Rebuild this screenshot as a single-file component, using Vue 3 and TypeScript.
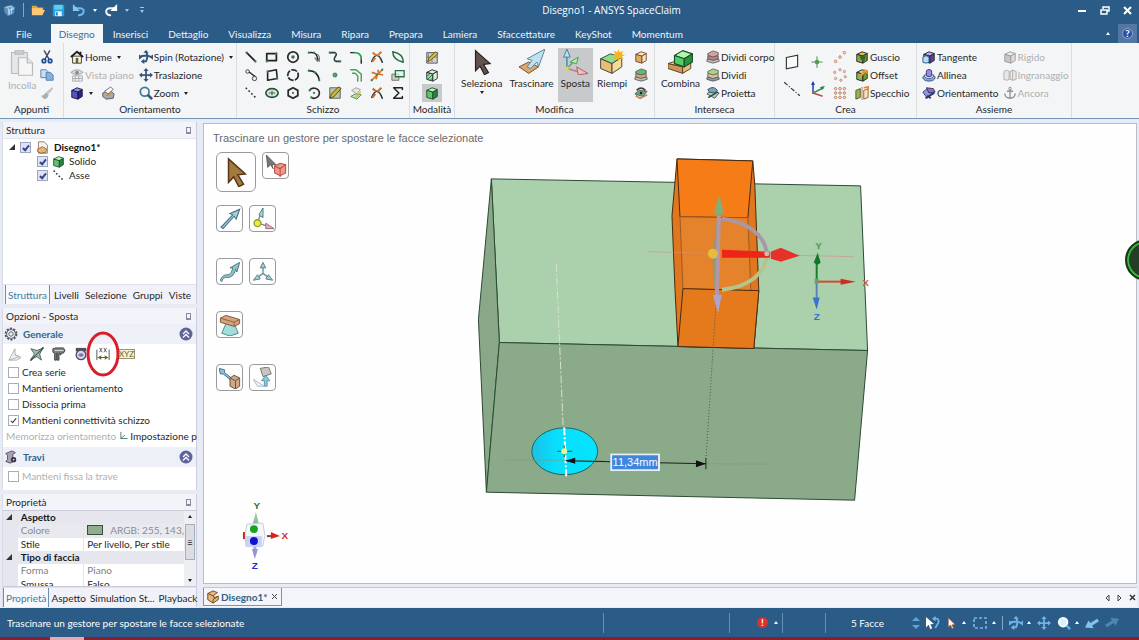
<script setup lang="ts">
import { h, ref, type FunctionalComponent } from 'vue'

const cube = (top: string, left: string, right: string, line = '#222') =>
  `<g stroke="${line}" stroke-width="1" stroke-linejoin="round"><path d="M2 5l6-3 6 2-5 3z" fill="${top}"/><path d="M2 5l7 2v8l-7-2z" fill="${left}"/><path d="M9 7l5-3v8l-5 3z" fill="${right}"/></g>`
const stroke = (d: string, c = '#222', w = 1.6) =>
  `<path d="${d}" fill="none" stroke="${c}" stroke-width="${w}" stroke-linecap="round" stroke-linejoin="round"/>`
const ends = (...pts: number[][]) =>
  pts.map(([x, y]) => `<circle cx="${x}" cy="${y}" r="1.3" fill="#3c8a5a"/>`).join('')
const slabs = (a: string, b: string, c: string) =>
  `<g stroke="#444" stroke-width=".8" stroke-linejoin="round"><path d="M1 11l6-2 8 2v2l-7 2-7-2z" fill="${c}"/><path d="M2 7l6-2 6 2v3l-6 2-6-2z" fill="${b}"/><path d="M2 4l6-3 6 2v3l-6 2-6-2z" fill="${a}"/></g>`
const move = (c: string) =>
  `<path d="M8 0l3 3.500H9v3.500h3.500V5L16 8l-3.500 3V9H9v3.500h2L8 16l-3-3.500h2V9H3.500v2L0 8l3.500-3v2H7V3.500H5z" fill="${c}"/>`
const spin = (c: string) =>
  `<path d="M5 3h6L8 0z" fill="${c}"/><path d="M0 5v6l4-3zM16 5v6l-4-3z" fill="${c}"/><path d="M8 2q3 5 0 11H4M1 8c3-2 9-2 13 0" fill="none" stroke="${c}" stroke-width="2.200"/><path d="M6 10v6l-4-3z" fill="${c}"/>`
const cross = (c: string) =>
  stroke('M2 13Q5 6 8 6T14 14', '#333', 1.8) + `<path d="M3 3l4 3M13 2L8 7M3 13l3-4" fill="none" stroke="${c}" stroke-width="2.400"/>`

const icons: Record<string, string> = {
  logo: `<path d="M1 4l9-3 5 3-2 8-7 3-4-5z" fill="#5e91be"/><path d="M3 4l7-1 3 3-5 1-1 6M6 4l2 9M11 4l-1 8" stroke="#d4e6f5" fill="none"/>`,
  folder: `<path d="M1 3h5l2 2h6v3H1z" fill="#e9a23b"/><path d="M1 14V6h12v2h3l-3 6z" fill="#ffc878"/>`,
  save: `<path d="M1 1h14v14H1z" fill="#21a2df"/><path d="M3 1h10v6H3z" fill="#60cdea"/><path d="M4 9h8v6H4z" fill="#e5f6fb"/><path d="M5 10h2v4H5z" fill="#1b78b2"/>`,
  undo: stroke('M3 6h6c6 0 6 7-1 8', '#6fb5ef', 2.3) + `<path d="M1 1v8h8z" fill="#82c4f5"/>`,
  redo: stroke('M13 6H7C1 6 1 13 7 14', '#f2f6fa', 2.3) + `<path d="M15 1v8H7z" fill="#fff"/>`,
  paste: `<g stroke="#b9bbbd" stroke-width=".7" fill="#e6e7e8"><path d="M2 2h9v12H2z"/><path d="M4 1h5v2H4z" fill="#ccc"/><path d="M6 5h5l3 3v7H6z" fill="#f6f6f7"/><path d="M11 5v3h3"/></g>`,
  cut: stroke('M5 1l5 9M11 1L6 10', '#39455c') + `<g fill="none" stroke="#1d4e9b" stroke-width="2"><circle cx="4.500" cy="12.500" r="2"/><circle cx="11.500" cy="12.500" r="2"/></g>`,
  copy: `<g stroke="#4d79ac" fill="#c9def4"><path d="M1 2h6l2 2v7H1z"/><path d="M7 5h5l3 3v6H7z" fill="#86b1df"/></g>`,
  brush: `<path d="M14 1l1 2-5 6-3-2z" fill="#c4c4c4"/><path d="M7 7l3 3c-1 4-4 5-5 5l-4-4c3 0 4-2 6-4z" fill="#aeaeae"/>`,
  home: `<path d="M3 7h10v8H3z" fill="#fff8cc" stroke="#292929"/><path d="M1 8l7-6 7 6M12 5V2" fill="none" stroke="#1c1c1c" stroke-width="2"/><path d="M6.500 9h3v6h-3z" fill="#5b604f"/>`,
  plan: `<path d="M1 5q7-6 14 0-7 5-14 0z" fill="#ddd" stroke="#999"/><circle cx="8" cy="5" r="2" fill="#888"/><path d="M3 9h11v6H3zM3 12h11M6 9v6M10 9v6" fill="none" stroke="#a5a5a5"/>`,
  blueCube: cube('#8d91e9', '#5654bd', '#292774', '#171546'),
  section: `<path d="M2 8l8-3 5 4-1 5-8 1-4-3z" fill="#aaa8b9" stroke="#555"/><path d="M4 6l7-5 3 3-6 5z" fill="#f5f7fb" stroke="#666"/><path d="M6 11l5-2" stroke="#d28b3a" stroke-width="2"/>`,
  spin: spin('#35557c'),
  move: move('#35557c'),
  zoom: `<circle cx="6.500" cy="6.500" r="5" fill="#edf6fc" stroke="#477792" stroke-width="2"/><path d="M10 10l5 5" stroke="#365873" stroke-width="3"/>`,
  line: stroke('M3 3l10 10', '#222', 2) + ends([3, 3], [13, 13]),
  rect: stroke('M2 4h11v8H2z', '#222', 2) + ends([2, 13], [13, 4]),
  circle: `<circle cx="8" cy="8" r="6" fill="none" stroke="#2c2c2c" stroke-width="2"/><circle cx="8" cy="8" r="2" fill="#35744b"/>`,
  arcTan: stroke('M2 3c8-1 10 2 10 9') + stroke('M12 5q3 2 2 8M9 9l3 4 2-4', '#777', 1.3) + ends([2, 3], [8, 3]),
  spline: stroke('M2 3h6q3 1 0 5-2 4 1 5h5', '#2c3b33', 1.8) + ends([2, 3], [14, 13]),
  corner: stroke('M2 3h4M14 10v5') + stroke('M6 3q8 0 8 7', '#34a153', 2),
  trim: cross('#e17a2c'),
  bend: stroke('M2 2q0 9 12 12Q14 4 2 2', '#286f41', 1.7),
  tangentLine: stroke('M5 4l8 6') + `<g fill="#eee" stroke="#333"><circle cx="4" cy="4" r="2"/><circle cx="12" cy="12" r="2.500"/></g>`,
  rect3: stroke('M3 4l10-2 1 10-11 2z', '#222', 1.8) + ends([3, 4], [14, 12]),
  circle3: `<circle cx="8" cy="8" r="6" fill="none" stroke="#2c2c2c" stroke-width="2" stroke-dasharray="7 1.500"/>`,
  arc3: stroke('M2 3q10 0 12 11', '#222', 1.8) + ends([2, 3], [9, 5], [14, 14]),
  point: `<circle cx="8" cy="8" r="2.300" fill="#57a66d" stroke="#347947"/>`,
  offsetCurve: stroke('M2 2h6l6 5v8', '#499c61', 1.6) + stroke('M4 6h3l3 3v6', '#499c61', 1.6),
  split: `<path d="M2 14L14 2M2 5l6 2-1 6M9 2l1 5 5 1" fill="none" stroke="#d5732b" stroke-width="2"/>` + ends([8, 8], [14, 2], [2, 14]),
  scale: `<path d="M1 7h8v7H1z" fill="#c1d7c8" stroke="#7e6056"/><path d="M5 3h10v7H5z" fill="#e2f2e8" fill-opacity=".7" stroke="#277545" stroke-width="1.500"/>`,
  axis: `<path d="M2 2l12 12" stroke="#333" stroke-width="1.800" stroke-dasharray="2 2.500"/>`,
  ellipse: `<ellipse cx="8" cy="8" rx="7" ry="5" fill="#d8e8de" stroke="#2b5340" stroke-width="1.900"/>` + stroke('M5 8h6M8 6v4', '#37704b', 1.3),
  polygon: stroke('M8 2l5.500 3v6L8 14l-5.500-3V5z', '#2c2c2c', 2) + ends([8, 8]),
  arc: stroke('M3 5c2-4 10-3 11 2s-5 9-9 6', '#2c2c2c', 1.9) + ends([3, 5], [8, 8], [5, 13]),
  pencil: `<path d="M2 2h12v12H2z" fill="#b8c7a6" stroke="#565b44"/><path d="M2 14l2-5 8-8 3 2-8 9z" fill="#c7b637" stroke="#4a4325"/>`,
  project: `<path d="M2 12l5-3 7 1-5 5z" fill="#b9e4ba" stroke="#4d8550"/><path d="M3 5l5-3 5 2-4 5z" fill="#e6e8e1" stroke="#999"/>` + stroke('M8 13l5-6', '#dbbb34'),
  extend: cross('#c56d27'),
  sigma: stroke('M13 4V2H3l6 6-6 6h10v-2', '#222', 1.7),
  modeSketch: `<path d="M2 3h12v12H2z" fill="#cfd0cf" stroke="#4d4d4d"/><path d="M4 4v10M8 4v10M2 8h12" stroke="#7d7d7d"/><path d="M3 13l1-3 8-8 3 2-9 8z" fill="#e0bd31" stroke="#5d4c1e"/>`,
  modeSection: cube('#d9eedb', '#a9dcb5', '#dff3e2') + stroke('M3 9l3-3M3 13l6-6M6 14l3-3', '#22663a', 1),
  modeSolid: cube('#b9f2be', '#61c56d', '#278443', '#174c27'),
  select: `<path d="M4 1l9 8-4 .5 3 5-2.500 1.300-2.700-5.200L4 13.500z" fill="#63514e" stroke="#271e1d" stroke-width=".7"/>`,
  pull: `<path d="M0 11l6-3 6 3-6 4z" fill="#dca66c" stroke="#76532f" stroke-width=".6"/><path d="M16 0L5 6l3 1-3 4 2 1 4-4 1 3z" fill="#bfe3ed" stroke="#57839b" stroke-width=".6"/>`,
  sposta: stroke('M3 12V4', '#4d93b0', 1) + stroke('M3 12l7 2', '#c67980', 1) + stroke('M3 12l4-4', '#63ac72', 1) + `<path d="M3 0L1 5h4z" fill="#bde3ee" stroke="#447f9c" stroke-width=".6"/><path d="M9 11l7 4-6 1z" fill="#efbbbd" stroke="#b15f69" stroke-width=".6"/><path d="M10 5L5 8l4 1z" fill="#b5efb5" stroke="#4b9a5d" stroke-width=".6"/><circle cx="3" cy="12" r="1.300" fill="#e5d34e"/>`,
  fill: `<g stroke="#494436" stroke-width=".6"><path d="M1 6l6-3 7 2-6 4z" fill="#8ddd8a"/><path d="M1 6l7 3v6l-7-3z" fill="#e7bd7a"/><path d="M8 9l6-4v6l-6 4z" fill="#f5db9b"/></g><path d="M12 0l.7 2L15 1l-1 2 2 1-2 .5 1 2-2.300-1-.7 2-.7-2-2.300 1 1-2L8 4l2-1-1-2 2.300 1z" fill="#f6b420"/>`,
  repFace: cube('#ffe4b2', '#e6a862', '#f9e0c2', '#6c4728'),
  moveFaces: slabs('#69b67a', '#df9f7d', '#b8c5ae'),
  equation: `<path d="M1 9l5-4 9 1-5 6z" fill="#6fa785" stroke="#455747"/><path d="M2 11l5 3 8-4" fill="none" stroke="#b28d60" stroke-width="2"/><path d="M3 5q5-5 10 0" fill="none" stroke="#444" stroke-width="2"/><circle cx="8" cy="8" r="1.500" fill="#222"/>`,
  combine: `<g stroke="#5b4328" stroke-width=".6" stroke-linejoin="round"><path d="M0 9l6-2 8 1-5 3z" fill="#f2cb91"/><path d="M0 9l9 2v4l-9-3z" fill="#d29557"/><path d="M9 11l5-3v4l-5 3z" fill="#eabb77"/></g><g stroke="#184e24" stroke-width=".7" stroke-linejoin="round"><path d="M4 4l5-3 6 2-5 3z" fill="#b1f5a8"/><path d="M4 4l6 2v5L4 9z" fill="#54ce65"/><path d="M10 6l5-3v5l-5 3z" fill="#269340"/></g>`,
  divBody: slabs('#d7a298', '#a9868b', '#cabbbf'),
  divide: slabs('#a6d28e', '#e6c592', '#8e99a8'),
  proj: `<path d="M1 9l5-4 9 3-5 6z" fill="#b5cfa7" stroke="#414d58"/><path d="M2 4q7-5 11 1l-3 3-6-1z" fill="#78a5bd" stroke="#38414c"/>` + stroke('M3 13l10-6', '#244b60'),
  plane: `<path d="M3 4l10-2v10L3 14z" fill="#fafafa" stroke="#333"/>`,
  pointG: stroke('M8 1v14M1 8h14', '#579b55', 1.5) + `<circle cx="8" cy="8" r="3" fill="#4b9b50"/>`,
  axisL: `<path d="M1 2l14 12" stroke="#333" stroke-dasharray="4 1.500 1 1.500"/>`,
  origin: stroke('M4 12V2', '#284bb4') + stroke('M4 12l10-5', '#3a9462') + stroke('M4 12l9 3', '#b64c4e') + `<path d="M4 0L2 4h4z" fill="#2440b4"/><path d="M16 5l-5 1 2 3z" fill="#26863c"/>`,
  patLine: `<g fill="#f8d8bc" stroke="#c28366"><circle cx="3" cy="13" r="1.500"/><circle cx="8" cy="8" r="1.500"/><circle cx="13" cy="3" r="1.500"/></g>`,
  patCirc: `<g fill="#f5dacc" stroke="#b98776"><circle cx="8" cy="2" r="1.300"/><circle cx="13" cy="4" r="1.300"/><circle cx="14" cy="10" r="1.300"/><circle cx="9" cy="14" r="1.300"/><circle cx="3" cy="12" r="1.300"/><circle cx="2" cy="5" r="1.300"/></g>`,
  patGrid: `<g fill="#fae3ce" stroke="#b67756">${[3, 8, 13].map(x => [3, 8, 13].map(y => `<circle cx="${x}" cy="${y}" r="1.400"/>`).join('')).join('')}</g>`,
  shell: cube('#ddbb4b', '#8aad42', '#679833') + `<path d="M5 8l3-2 4 1-1 5-4-1z" fill="#366831"/>`,
  offset: cube('#c8d78b', '#8eb44b', '#719a38') + `<path d="M9 1l5 1 1 5-3-2-5 5-2-2 5-5z" fill="#e89b43"/>`,
  mirror: `<path d="M1 5l5-2v10l-5 2z" fill="#9ab64b" stroke="#425120"/><path d="M10 5l5-2v10l-5 2z" fill="#f8e3bf" stroke="#7b5c32"/><path d="M8 1v15" stroke="#bd6b2c"/><path d="M10 2l5-1v4" fill="none" stroke="#ec8435" stroke-width="2"/>`,
  tangent: cube('#b8adf0', '#8b70c6', '#5c409e') + `<path d="M1 8q4-3 7 0v6q-4 2-7 0z" fill="#b5dff0" stroke="#284b87"/>`,
  align: `<ellipse cx="8" cy="11" rx="7" ry="4" fill="#8ba8d7" stroke="#314a87"/><ellipse cx="8" cy="9" rx="5" ry="3" fill="#d8e6f5" stroke="#405b91"/><path d="M5 3q3-3 6 0v6q-3 2-6 0z" fill="#9a8bdb" stroke="#413680"/>`,
  orient: `<path d="M1 7l5-4 6 5-6 6z" fill="#8f98da" stroke="#303a6d"/><path d="M5 2l8 1 2 4-7 1z" fill="#8772be" stroke="#34285c"/><path d="M4 14l10-6M6 11l4 3" stroke="#253964" stroke-width="2"/>`,
  rigid: cube('#e9e9e9', '#c6c6c6', '#ddd', '#999'),
  gear: `<g fill="#e8e8e8" stroke="#aaa"><path d="M1 4q3-3 6 0v9q-3 2-6 0zM8 4q3-3 7 0v9q-3 2-7 0zM11 2v12"/></g>`,
  anchor: stroke('M8 4v10M5 6h6M2 9q1 5 6 5t6-5', '#909090', 1.5) + `<circle cx="8" cy="3" r="1.500" fill="none" stroke="#888"/>`,
  doc: `<path d="M3 1h7l4 4v10H3z" fill="#f7f3f1" stroke="#886b5d"/><path d="M2 10l6-3 5 3-1 4-6 1-4-2z" fill="#e6b572" stroke="#805b33"/>`,
  part: `<g stroke="#67411d"><path d="M2 4l6-3 5 2-4 3v3l5-2v4l-6 4-6-4z" fill="#e5b779"/><path d="M2 4l7 3M8 11v4M8 11l6-4" fill="none"/></g>`,
  cog: `<g fill="none" stroke="#4e545f"><circle cx="8" cy="8" r="6.300" stroke-width="2" stroke-dasharray="2.500 1.450"/><circle cx="8" cy="8" r="5"/><circle cx="8" cy="8" r="2.500"/></g>`,
  beam: `<path d="M2 4l7-3 4 2-3 2v6l3 1-6 3-5-2 2-2V6z" fill="#aaa0b7" stroke="#514760"/><circle cx="11" cy="11" r="3" fill="#353040"/><circle cx="11" cy="11" r="1" fill="#ddd"/>`,
  opt1: `<path d="M1 15L8 2v7l5 2-12 4zM8 9l7 3-5 3H1" fill="#f1f3f4" stroke="#aaa"/>`,
  opt2: stroke('M1 15L15 1', '#394c4c', 1.7) + `<path d="M1 2l7 2 7-3-4 7 2 7-5-4-7 3 4-6z" fill="#a6b9b6" stroke="#435b57"/>` + stroke('M2 14L14 2', '#394c4c', 1.2),
  opt3: `<path d="M1 2l3-1h9l2 3-2 3h-2l-1 2H9V7H8v8H6V7H5v8H3V7L1 6z" fill="#7d8581" stroke="#373c3a"/><path d="M3 4h10" stroke="#e2e6e3"/>`,
  opt4: `<path d="M2 1h12v4H2z" fill="#53515c"/><circle cx="8" cy="9" r="5.500" fill="#d5d7e9" stroke="#4b4a67" stroke-width="1.500"/><ellipse cx="8" cy="9" rx="3" ry="2" fill="#777bac"/>`,
  ruler: `<path d="M1 3v12M15 3v12M2 12h12" stroke="#444"/><path d="M2 12l4-2.500v5zM14 12l-4-2.500v5z" fill="#53731f"/><path d="M4 1l3 5M7 1L4 6M9 1l3 5M12 1L9 6" stroke="#555"/>`,
  axes: stroke('M3 2v10h10M3 12l6-5', '#326b57', 1.3),
  swap: `<path d="M0 1l9 8-4 .5 2 4.500-2 1-2-5-3 3z" fill="#fff"/>` + stroke('M9 3q7-1 5 5l-3 5', '#72b5ea', 2) + `<path d="M11 0v6L7 3z" fill="#72b5ea"/>`,
  arrowLight: `<path d="M3 1l9 9-4 .5 2 4-2 1-2-5-3 3z" fill="#fff" stroke="#a0543f"/>`,
  box: `<path d="M2 3h12v10H2z" fill="none" stroke="#72b5ea" stroke-width="1.700" stroke-dasharray="3 2"/>`,
  spinLight: spin('#70b3e8'),
  moveLight: move('#70b3e8'),
  zoomLight: `<circle cx="7" cy="7" r="5" fill="#d9f0ff" stroke="#fff" stroke-width="2"/><path d="M11 11l4 4" stroke="#67acde" stroke-width="3"/>`,
  back: `<path d="M0 13l4-8 2 3 8-5 2 3-8 5 2 3z" fill="#84c2ef"/>`,
  fwd: `<path d="M16 3l-4 8-2-3-8 5-2-3 8-5-2-3z" fill="#4d86b4"/>`,
  guideArrow: `<path d="M4 1l9 8-4 .5 3 5-2.500 1.300-2.700-5.200L4 13.500z" fill="#a17a3e" stroke="#5a371a" stroke-width=".8"/>`,
  guideSolid: `<path d="M1 0l7 7-3 0 1 3-2-3-2 2z" fill="#777" stroke="#555" stroke-width=".6"/><path d="M7 8l4-2 4 1v6l-4 2-4-2z" fill="#eb9a8f" stroke="#c35043" stroke-width=".8"/><path d="M7 8l4 2 4-3M11 9v7" fill="none" stroke="#c35043" stroke-width=".8"/>`,
  guideDir: `<path d="M15 1l-2.500 7-1.500-2L3 15l-1.500-1L10 5 8 4z" fill="#a3d2dd" stroke="#476f84" stroke-width=".8"/>`,
  guideOrigin: stroke('M4 11l2-6M4 11l7 2', '#83826d', 1) + `<path d="M8 0L5 5l3 2z" fill="#a9d7d6" stroke="#4e7785" stroke-width=".7"/><path d="M10 11l6 4-6 0z" fill="#dcb0bf" stroke="#96566f" stroke-width=".6"/><circle cx="4" cy="11" r="2.500" fill="#e5ed47" stroke="#99a125"/>`,
  guidePath: `<path d="M15 1l-2 7-1-2c-1 5-4 6-6 6s-3 0-4 3l-1-1c1-3 3-4 5-4 2 0 3-1 4-5L8 5z" fill="#8fc4cb" stroke="#46777e" stroke-width=".7"/>`,
  guideAxes: stroke('M8 9V4M8 9l-4 3M8 9l4 3', '#698e96', 1) + `<path d="M8 1L6 5h4zM1 14l3-4 2 3zM15 14l-3-4-2 3z" fill="#a5cdd3" stroke="#55808a" stroke-width=".7"/>`,
  guideSupport: `<path d="M5 7h6l3 7-6 2-6-2z" fill="#a4dcd8" stroke="#408f8c" stroke-width=".7"/><path d="M1 3l4-2 10 3v3l-4 2L1 6z" fill="#d8a27c" stroke="#795740" stroke-width=".7"/><path d="M1 3l10 3 4-2M11 6v3" fill="none" stroke="#795740" stroke-width=".6"/>`,
  guideUpTo: `<path d="M0 1l4 1v2l5 4-1 1-5-4-2 0z" fill="#87c5d6" stroke="#42748b" stroke-width=".7"/><path d="M8 8l3-2 4 2v6l-3 2-4-2z" fill="#cca884" stroke="#6d5141" stroke-width=".7"/><path d="M8 8l4 2 3-2M12 10v6" fill="none" stroke="#6d5141" stroke-width=".7"/>`,
  guideAnchor: `<path d="M6 1l6-1 2 5-6 2z" fill="#c6c5c3" stroke="#77756f" stroke-width=".7"/><path d="M10 6l3 4h-2v4H9v-4H7z" fill="#8dc8dd" stroke="#4d89a0" stroke-width=".6"/><path d="M1 9l8 5-5 0z" fill="#edf5f8" stroke="#9fb1bd" stroke-width=".6"/>`
}

const Icon: FunctionalComponent<{ name: string; size?: number }> = props =>
  h('svg', {
    viewBox: '0 0 16 16',
    width: props.size ?? 14,
    height: props.size ?? 14,
    'aria-hidden': 'true',
    innerHTML: icons[props.name]
  })
Icon.props = ['name', 'size']

const tabs = ['File', 'Disegno', 'Inserisci', 'Dettaglio', 'Visualizza', 'Misura', 'Ripara', 'Prepara', 'Lamiera', 'Sfaccettature', 'KeyShot', 'Momentum']
const sketchTools = [
  'line', 'rect', 'circle', 'arcTan', 'spline', 'corner', 'trim', 'bend',
  'tangentLine', 'rect3', 'circle3', 'arc3', 'point', 'offsetCurve', 'split', 'scale',
  'axis', 'ellipse', 'polygon', 'arc', 'pencil', 'project', 'extend', 'sigma'
]
const guides = [
  ['guideArrow', 'guideSolid'],
  ['guideDir', 'guideOrigin'],
  ['guidePath', 'guideAxes'],
  ['guideSupport'],
  ['guideUpTo', 'guideAnchor']
]
const options = ref([
  { id: 'serie', label: 'Crea serie', on: false },
  { id: 'orient', label: 'Mantieni orientamento', on: false },
  { id: 'dissocia', label: 'Dissocia prima', on: false },
  { id: 'conn', label: 'Mantieni connettività schizzo', on: true }
])
const tree = ref([
  { id: 'disegno', label: 'Disegno1*', icon: 'doc', on: true },
  { id: 'solido', label: 'Solido', icon: 'modeSolid', on: true },
  { id: 'asse', label: 'Asse', icon: 'axis', on: true }
])
const dimension = ref('11,34mm')
</script>

<template>
  <div class="app">
    <header class="titlebar">
      <div class="quick">
        <Icon name="logo" :size="13" />
        <i class="bar"></i>
        <button aria-label="Apri"><Icon name="folder" /></button>
        <button aria-label="Salva"><Icon name="save" :size="13" /></button>
        <button aria-label="Annulla"><Icon name="undo" /><i class="caret light"></i></button>
        <button aria-label="Ripeti"><Icon name="redo" /><i class="caret faint"></i></button>
        <button class="customize" aria-label="Personalizza"><i class="caret faint"></i></button>
      </div>
      <h1>Disegno1 - ANSYS SpaceClaim</h1>
      <div class="window-buttons">
        <button aria-label="Riduci"><svg width="9" height="9" viewBox="0 0 9 9"><path d="M0 5h8" stroke="#fff" stroke-width="2" /></svg></button>
        <button aria-label="Ripristina"><svg width="10" height="9" viewBox="0 0 10 9"><path d="M3 3V1h6v4H7M1 4h6v4H1z" fill="none" stroke="#fff" stroke-width="1.500" /></svg></button>
        <button aria-label="Chiudi"><svg width="9" height="9" viewBox="0 0 9 9"><path d="M1 1l7 7M8 1L1 8" stroke="#fff" stroke-width="2" /></svg></button>
      </div>
    </header>

    <nav class="tabs">
      <button v-for="t in tabs" :key="t" :class="{ active: t === 'Disegno', file: t === 'File' }">{{ t }}</button>
      <div class="tabs-end">
        <button aria-label="Comprimi"><i class="caret up light"></i></button>
        <button class="help" aria-label="Guida"><span>?</span></button>
      </div>
    </nav>

    <div class="ribbon">
      <section class="group clipboard">
        <div class="tools">
          <button class="big off"><Icon name="paste" :size="28" />Incolla</button>
          <div class="stack">
            <button aria-label="Taglia"><Icon name="cut" /></button>
            <button aria-label="Copia"><Icon name="copy" /></button>
            <button aria-label="Copia formato"><Icon name="brush" /></button>
          </div>
        </div>
        <h2>Appunti</h2>
      </section>

      <section class="group orientation">
        <div class="tools">
          <div class="stack">
            <button><Icon name="home" />Home<i class="caret"></i></button>
            <button class="off"><Icon name="plan" />Vista piano</button>
            <div class="row">
              <button aria-label="Viste"><Icon name="blueCube" /><i class="caret"></i></button>
              <button aria-label="Sezione"><Icon name="section" /></button>
            </div>
          </div>
          <div class="stack">
            <button><Icon name="spin" />Spin (Rotazione)<i class="caret"></i></button>
            <button><Icon name="move" />Traslazione</button>
            <button><Icon name="zoom" />Zoom<i class="caret"></i></button>
          </div>
        </div>
        <h2>Orientamento</h2>
      </section>

      <section class="group sketch">
        <div class="tools sketch-grid">
          <button v-for="s in sketchTools" :key="s" :aria-label="s"><Icon :name="s" /></button>
        </div>
        <h2>Schizzo</h2>
      </section>

      <section class="group mode">
        <div class="tools">
          <div class="stack">
            <button aria-label="Modalità schizzo"><Icon name="modeSketch" /></button>
            <button aria-label="Modalità sezione"><Icon name="modeSection" /></button>
            <button class="pressed" aria-label="Modalità 3D"><Icon name="modeSolid" /></button>
          </div>
        </div>
        <h2>Modalità</h2>
      </section>

      <section class="group edit">
        <div class="tools">
          <button class="big"><Icon name="select" :size="26" />Seleziona<i class="caret"></i></button>
          <button class="big"><Icon name="pull" :size="26" />Trascinare</button>
          <button class="big pressed"><Icon name="sposta" :size="26" />Sposta</button>
          <button class="big"><Icon name="fill" :size="26" />Riempi</button>
          <div class="stack">
            <button aria-label="Sostituisci"><Icon name="repFace" /></button>
            <button aria-label="Sposta facce"><Icon name="moveFaces" /></button>
            <button aria-label="Modifica curve"><Icon name="equation" /></button>
          </div>
        </div>
        <h2>Modifica</h2>
      </section>

      <section class="group intersect">
        <div class="tools">
          <button class="big"><Icon name="combine" :size="26" />Combina</button>
          <div class="stack">
            <button><Icon name="divBody" />Dividi corpo</button>
            <button><Icon name="divide" />Dividi</button>
            <button><Icon name="proj" />Proietta</button>
          </div>
        </div>
        <h2>Interseca</h2>
      </section>

      <section class="group create">
        <div class="tools">
          <div class="stack two">
            <button aria-label="Piano"><Icon name="plane" :size="18" /></button>
            <button aria-label="Asse"><Icon name="axisL" :size="18" /></button>
          </div>
          <div class="stack two">
            <button aria-label="Punto"><Icon name="pointG" :size="12" /></button>
            <button aria-label="Origine"><Icon name="origin" :size="16" /></button>
          </div>
          <div class="stack">
            <button aria-label="Serie lineare"><Icon name="patLine" /></button>
            <button aria-label="Serie circolare"><Icon name="patCirc" /></button>
            <button aria-label="Serie a griglia"><Icon name="patGrid" /></button>
          </div>
          <div class="stack">
            <button><Icon name="shell" />Guscio</button>
            <button><Icon name="offset" />Offset</button>
            <button><Icon name="mirror" />Specchio</button>
          </div>
        </div>
        <h2>Crea</h2>
      </section>

      <section class="group assembly">
        <div class="tools">
          <div class="stack">
            <button><Icon name="tangent" />Tangente</button>
            <button><Icon name="align" />Allinea</button>
            <button><Icon name="orient" />Orientamento</button>
          </div>
          <div class="stack">
            <button class="off"><Icon name="rigid" />Rigido</button>
            <button class="off"><Icon name="gear" />Ingranaggio</button>
            <button class="off"><Icon name="anchor" />Ancora</button>
          </div>
        </div>
        <h2>Assieme</h2>
      </section>
    </div>

    <main class="workspace">
      <aside class="side">
        <section class="panel structure">
          <header class="panel-head">Struttura<i class="pin"></i></header>
          <ul class="tree">
            <li v-for="(n, i) in tree" :key="n.id" :class="{ root: i === 0 }">
              <i v-if="i === 0" class="expander"></i>
              <input :id="n.id" v-model="n.on" type="checkbox" class="check blue" />
              <Icon :name="n.icon" :size="13" />
              <label :for="n.id">{{ n.label }}</label>
            </li>
          </ul>
          <nav class="panel-tabs">
            <button class="active">Struttura</button>
            <button>Livelli</button>
            <button>Selezione</button>
            <button>Gruppi</button>
            <button>Viste</button>
          </nav>
        </section>

        <section class="panel options">
          <header class="panel-head">Opzioni - Sposta<i class="pin"></i></header>
          <h3><Icon name="cog" />Generale<svg class="fold" viewBox="0 0 14 14" width="14" height="14"><circle cx="7" cy="7" r="6.500" fill="#60639a" /><path d="M4 7l3-3 3 3M4 10.500l3-3 3 3" fill="none" stroke="#fff" stroke-width="1.300" /></svg></h3>
          <div class="option-icons">
            <button aria-label="Piano"><Icon name="opt1" /></button>
            <button aria-label="Direzione"><Icon name="opt2" /></button>
            <button aria-label="Calibro"><Icon name="opt3" /></button>
            <button aria-label="Rotazione"><Icon name="opt4" /></button>
            <button class="marked" aria-label="Righello">
              <Icon name="ruler" />
              <svg class="mark" viewBox="0 0 34 46" width="34" height="46"><ellipse cx="17" cy="23" rx="15" ry="21" fill="none" stroke="#d81e2c" stroke-width="3" /></svg>
            </button>
            <button class="xyz" aria-label="Coordinate">XYZ</button>
          </div>
          <div v-for="o in options" :key="o.id" class="option">
            <input :id="o.id" v-model="o.on" type="checkbox" class="check" />
            <label :for="o.id">{{ o.label }}</label>
          </div>
          <div class="option links">
            <button class="off">Memorizza orientamento</button>
            <button><Icon name="axes" :size="10" />Impostazione p</button>
          </div>
          <h3 class="second"><Icon name="beam" />Travi<svg class="fold" viewBox="0 0 14 14" width="14" height="14"><circle cx="7" cy="7" r="6.500" fill="#60639a" /><path d="M4 7l3-3 3 3M4 10.500l3-3 3 3" fill="none" stroke="#fff" stroke-width="1.300" /></svg></h3>
          <div class="option off">
            <input id="fissa" type="checkbox" class="check" disabled />
            <label for="fissa">Mantieni fissa la trave</label>
          </div>
        </section>

        <section class="panel properties">
          <header class="panel-head">Proprietà<i class="pin"></i></header>
          <div class="prop-body">
            <table>
              <colgroup><col class="c1" /><col class="c2" /><col /></colgroup>
              <tbody>
                <tr class="cat"><td><i class="expander"></i></td><th colspan="2">Aspetto</th></tr>
                <tr class="shade"><td></td><td>Colore</td><td><i class="swatch"></i>ARGB: 255, 143,</td></tr>
                <tr><td></td><td>Stile</td><td>Per livello, Per stile</td></tr>
                <tr class="cat"><td><i class="expander"></i></td><th colspan="2">Tipo di faccia</th></tr>
                <tr class="muted"><td></td><td>Forma</td><td>Piano</td></tr>
                <tr><td></td><td>Smussa</td><td>Falso</td></tr>
              </tbody>
            </table>
            <div class="scroll"><i class="caret up"></i><span class="thumb">≡</span><i class="caret"></i></div>
          </div>
          <nav class="panel-tabs">
            <button class="active">Proprietà</button>
            <button>Aspetto</button>
            <button>Simulation St...</button>
            <button>Playback</button>
          </nav>
        </section>
      </aside>

      <section class="stage">
        <div class="viewport">
          <svg class="scene" viewBox="204 124 932 460" preserveAspectRatio="xMidYMid meet">
            <defs>
              <linearGradient id="hole" x1="0" x2="1" y1="0" y2="0">
                <stop offset="0" stop-color="#1fbfe0" />
                <stop offset=".2" stop-color="#0ed2f4" />
                <stop offset=".4" stop-color="#08e0fc" />
                <stop offset="1" stop-color="#05e4ff" />
              </linearGradient>
            </defs>
            <g stroke="#2c4a33" stroke-width="1" stroke-linejoin="round">
              <path d="M491 179L861 186L868 351L499 343Z" fill="#abd0ac" />
              <path d="M491 179L499 343L486 493L478 320Z" fill="#88a888" />
              <path d="M499 343L868 351L855 501L486 493Z" fill="#8aaa89" />
            </g>
            <g stroke="#4a2a10" stroke-width="1" stroke-linejoin="round">
              <path d="M677 159L753 161L755 185L759 291L754 349L678 347L675 290L672 216Z" fill="#e0771e" />
              <path d="M677 159L753 161L748 218L680 217Z" fill="#f67c17" />
              <path d="M680 217L748 218L751 291L683 289Z" fill="#e4832b" stroke="#9b5a25" />
              <path d="M683 289L759 291L754 349L678 347Z" fill="#e57a1c" />
            </g>
            <path d="M556 264L563 430" stroke="#d5e1cf" stroke-dasharray="8 2 2 2" />
            <path d="M648 252L854 257" stroke="#de8a80" stroke-opacity=".6" />
            <path d="M716 306L706 460" stroke="#4d554d" stroke-dasharray="1 2" />
            <ellipse cx="564.500" cy="452" rx="33" ry="23.500" fill="url(#hole)" stroke="#24615d" />
            <path d="M564 428L566 477" stroke="#f5ffff" stroke-width="2" stroke-dasharray="8 2 2 2" />
            <path d="M557 452h15M564 446v12" stroke="#2c5b4c" />
            <circle cx="564" cy="452" r="3" fill="#e6f58c" />
            <path d="M505 461h100M660 464L768 465" stroke="#7d9a7c" stroke-opacity=".6" />
            <path d="M566 461.500L706 464.500M706 459v11" stroke="#1c231c" fill="none" />
            <path d="M565 461.500l10-3v6zM706 464.500l-10-3.500v7z" fill="#111" />
            <foreignObject x="610" y="454" width="50" height="18">
              <input v-model="dimension" class="dimension" aria-label="Distanza" />
            </foreignObject>

            <path d="M722 219C748 222 766 236 767 255" fill="none" stroke="#a997a4" stroke-width="4" />
            <path d="M722 290C748 288 766 274 767 255" fill="none" stroke="#b4c48c" stroke-width="4" />
            <path d="M719 214L714 260L717 298" fill="none" stroke="#8f9a72" stroke-width="3" />
            <path d="M719 216L717 300" stroke="#b397a8" stroke-width="4" />
            <path d="M719.500 195L724 213L719 216L714 213Z" fill="#83ad79" />
            <path d="M713 295L722 295L718 314Z" fill="#a9a5ce" />
            <path d="M722 250L770 252L770 258L722 258Z" fill="#ee2418" />
            <path d="M771 252L781 248L800 256L781 262L771 259Z" fill="#e6332a" />
            <circle cx="767" cy="254" r="2.500" fill="#d3b8ba" />
            <circle cx="713" cy="254" r="5" fill="#e5bc3d" />

            <path d="M817 281V262" stroke="#167e2c" stroke-width="2" />
            <path d="M818 253l3 10-3 2-4-2z" fill="#137529" />
            <path d="M817 282h25" stroke="#ce4a33" stroke-width="2" />
            <path d="M841 279l15 3-15 3z" fill="#d32820" />
            <path d="M817 282v18" stroke="#5b82bd" stroke-width="2" />
            <path d="M813 298h7l-3 12z" fill="#3b72d2" />
            <rect x="815" y="279" width="4" height="5" fill="#75986d" />
            <g class="labels">
              <text x="819" y="249" fill="#4a9b53">Y</text>
              <text x="866" y="286" fill="#cb5a51">X</text>
              <text x="817" y="320" fill="#3b70ca">Z</text>
              <text x="256" y="510" fill="#287541">Y</text>
              <text x="284" y="540" fill="#d62c27">X</text>
              <text x="254" y="570" fill="#292cc6">Z</text>
            </g>

            <path d="M255 513l3 11h-6z" fill="#94c79d" />
            <path d="M254 522v33" stroke="#9cabc8" stroke-width="3" />
            <path d="M246 525l16-1 2 12-2 11h-17l-1-11z" fill="#f4f8fb" stroke="#c5cfdb" />
            <path d="M245 537h16v11h-16z" fill="#c8d2f2" />
            <circle cx="253" cy="530" r="4" fill="#16a51f" />
            <circle cx="253" cy="542" r="4" fill="#1212ce" />
            <path d="M242 533h2v7h-2z" fill="#cf2225" />
            <path d="M266 537h6" stroke="#8d3a34" stroke-width="2" />
            <path d="M270 533l9 4-9 3z" fill="#d6251d" />
            <path d="M251 550h6l-3 10z" fill="#9b93d5" />
          </svg>

          <div class="overlay">
            <p class="hint">Trascinare un gestore per spostare le facce selezionate</p>
            <div v-for="(row, i) in guides" :key="i" class="guide-row" :class="{ first: i === 0 }">
              <button v-for="(g, j) in row" :key="g" :class="{ large: i === 0 && j === 0 }" :aria-label="g">
                <Icon :name="g" :size="i === 0 && j === 0 ? 30 : 22" />
              </button>
            </div>
          </div>
        </div>
        <div class="doc-tabs">
          <button class="doc"><Icon name="part" />Disegno1*<svg class="close" width="7" height="7" viewBox="0 0 7 7"><path d="M1 1l5 5M6 1L1 6" stroke="#444" /></svg></button>
          <div class="doc-nav">
            <button aria-label="Precedente"><svg width="5" height="8" viewBox="0 0 5 8"><path d="M4 1v6L1 4z" fill="none" stroke="#444" /></svg></button>
            <button aria-label="Successivo"><svg width="5" height="8" viewBox="0 0 5 8"><path d="M1 1v6l3-3z" fill="none" stroke="#444" /></svg></button>
            <button aria-label="Chiudi scheda"><svg width="7" height="7" viewBox="0 0 7 7"><path d="M1 1l5 5M6 1L1 6" stroke="#333" stroke-width="1.500" /></svg></button>
          </div>
        </div>
        <span class="recorder"></span>
      </section>
    </main>

    <footer class="status">
      <p>Trascinare un gestore per spostare le facce selezionate</p>
      <div class="status-cell progress"></div>
      <div class="status-cell messages"><button aria-label="Messaggi"><span class="alert">!</span><i class="caret up light"></i></button></div>
      <div class="status-cell blank"></div>
      <div class="status-cell count">5 Facce</div>
      <div class="status-tools">
        <span class="spinner"><i class="caret up"></i><i class="caret"></i></span>
        <button aria-label="Alterna selezione"><Icon name="swap" /></button>
        <button aria-label="Seleziona"><Icon name="arrowLight" :size="12" /><i class="caret up light"></i></button>
        <button aria-label="Riquadro"><Icon name="box" :size="16" /><i class="caret up light"></i></button>
        <i class="bar"></i>
        <button aria-label="Ruota"><Icon name="spinLight" /><i class="caret up light"></i></button>
        <button aria-label="Trasla"><Icon name="moveLight" /></button>
        <button aria-label="Zoom"><Icon name="zoomLight" /><i class="caret up light"></i></button>
        <button aria-label="Vista precedente"><Icon name="back" /></button>
        <button aria-label="Vista successiva"><Icon name="fwd" /></button>
      </div>
    </footer>
    <div class="edge"><span></span></div>
  </div>
</template>

<style>
body { margin: 0; overflow: hidden; }
</style>

<style scoped>
.app {
  display: flex;
  flex-direction: column;
  height: 100vh;
  background: #e8eaf4;
  color: #26282b;
  font: 10px/14px Lato, "Liberation Sans", Arial, sans-serif;
}
button, input {
  font: inherit;
  color: inherit;
}
button {
  display: flex;
  align-items: center;
  gap: 1px;
  margin: 0;
  padding: 0;
  border: 0;
  background: none;
  white-space: nowrap;
}
svg { flex: none; display: block; }
h1, h2, h3, p, ul { margin: 0; padding: 0; font-size: 10px; font-weight: normal; }

.caret {
  flex: none;
  width: 0;
  height: 0;
  border: 2px solid transparent;
  border-top: 3px solid #222;
  border-bottom: 0;
}
.caret.up { border-top: 0; border-bottom: 3px solid #222; }
.caret.light { border-top-color: #fff; }
.caret.up.light { border-bottom-color: #fff; }
.caret.faint { border-top-color: #a7c3da; }
.bar { width: 1px; height: 14px; background: #7fa8c9; }

.titlebar {
  display: grid;
  grid-template-columns: 1fr auto 1fr;
  align-items: center;
  height: 24px;
  flex: none;
  background: #2b5b87;
  color: #fff;
}
.titlebar h1 { font: 10px/14px "Open Sans", "Noto Sans", sans-serif; padding: 0 0 4px 84px; }
.quick { display: flex; align-items: center; gap: 7px; padding: 0 0 4px 3px; margin-right: -84px; }
.quick button { gap: 7px; }
.quick .customize { margin-left: 4px; border-top: 1px solid #a7c3da; padding-top: 2px; }
.window-buttons { display: flex; justify-content: flex-end; gap: 13px; padding: 0 7px 4px 0; }

.tabs { display: flex; flex: none; height: 19px; background: #2b5b87; color: #f0f4f8; }
.tabs > button { padding: 0 10px; }
.tabs > button.file { padding: 0 19px 0 16px; }
.tabs > button.active { background: #f5f6f7; color: #3f6a92; padding: 0 8px; }
.tabs-end { display: flex; margin-left: auto; gap: 8px; padding-right: 2px; }
.help { width: 19px; justify-content: center; background: #54779f; }
.help span { width: 11px; height: 11px; border-radius: 6px; background: #2d50a5; border: 1px solid #8ea9da; color: #fff; line-height: 9px; font-weight: bold; box-sizing: border-box; }

.ribbon { display: flex; flex: none; height: 75px; background: #f4f5f6; border-bottom: 1px solid #7295b7; }
.group { display: flex; flex-direction: column; box-sizing: border-box; padding-top: 5px; position: relative; flex: none; border-right: 1px solid #dcdddf; }
.tools { display: flex; height: 54px; align-items: stretch; }
.group h2 { text-align: center; }
.stack { display: flex; flex-direction: column; }
.stack > button, .stack > .row { height: 18px; flex: none; }
.row { display: flex; gap: 8px; }
.stack.two > button { height: 27px; }
.stack .caret { margin-left: 4px; }
.big { flex-direction: column; gap: 1px; padding-top: 1px; }
.off { color: #aeb0b2; }
.pressed { background: #c8c9ca; }
.clipboard { width: 64px; }
.clipboard .tools { gap: 4px; padding-left: 8px; }
.orientation { width: 173px; }
.orientation .tools { gap: 5px; padding-left: 6px; }
.sketch { width: 173px; }
.sketch-grid { display: grid; grid-template-columns: repeat(8, 21px); grid-template-rows: repeat(3, 18px); padding-left: 3px; }
.sketch-grid button { justify-content: center; }
.mode { width: 45px; }
.mode .tools { justify-content: center; }
.mode .stack button { width: 20px; justify-content: center; }
.edit { width: 200px; }
.edit .tools { padding: 0 6px; gap: 7px; justify-content: space-between; }
.edit .big.pressed { margin: 0 -3px; padding: 1px 3px 0; }
.intersect { width: 120px; }
.intersect .tools { gap: 6px; padding-left: 6px; }
.create { width: 142px; }
.create .tools { gap: 8px; padding-left: 8px; }
.create .two button { justify-content: center; }
.assembly { width: 155px; }
.assembly .tools { gap: 4px; padding-left: 5px; }

.workspace { display: flex; flex: 1; min-height: 0; }
.side { display: flex; flex-direction: column; width: 200px; flex: none; padding: 3px 3px 1px 2px; box-sizing: border-box; gap: 4px; }
.panel { background: #fff; border-right: 1px solid #c9cfe0; border-left: 1px solid #d8dbe8; }
.panel-head { display: flex; align-items: center; justify-content: space-between; height: 16px; padding: 0 5px 0 3px; background: #f3f4fa; box-sizing: border-box; }
.pin { width: 3px; height: 4px; border: 1px solid #888c9d; border-bottom-width: 2px; }
.structure { display: flex; flex-direction: column; flex: 1; min-height: 0; }
.tree { flex: 1; list-style: none; padding-top: 1px; border-top: 1px solid #e2e4ee; }
.tree li { display: flex; align-items: center; gap: 4px; height: 14px; padding-left: 34px; }
.tree li.root { padding-left: 6px; gap: 5px; font-weight: bold; color: #111; }
.expander { display: inline-block; width: 0; height: 0; border: 3px solid transparent; border-right-color: #333; border-bottom-color: #333; }
.check { appearance: none; flex: none; width: 11px; height: 11px; box-sizing: border-box; margin: 0; border: 1px solid #a9adb5; background: #fff; display: grid; place-items: center; }
.check:checked::after { content: ""; width: 2px; height: 5px; border: solid #333; border-width: 0 1px 1px 0; transform: rotate(40deg); }
.check.blue { background: #dfe3f4; border-color: #9fa6bd; }
.check.blue:checked::after { border-color: #34478b; border-width: 0 2px 2px 0; }
.panel-tabs { display: flex; flex: none; height: 20px; background: #f1f2f9; border-top: 1px solid #dfe1ec; box-sizing: border-box; }
.panel-tabs button { padding: 0 3px; }
.panel-tabs .active { color: #47799d; border-left: 1px solid #6f90a8; border-right: 1px solid #6f90a8; margin: 0 1px 0 2px; padding: 0 2px; background: #f7f9fc; }
.properties .panel-tabs button { padding: 0 2px; }
.properties .panel-tabs .active { margin: 0; }
.options { height: 182px; flex: none; }
.options h3 { display: flex; align-items: center; gap: 5px; height: 20px; padding: 0 3px 0 1px; background: #eef0f8; font-weight: bold; color: #2d6690; }
.options .fold { margin-left: auto; }
.option-icons { display: flex; gap: 8px; height: 20px; padding: 0 0 0 5px; align-items: center; }
.marked { position: relative; }
.mark { position: absolute; left: -10px; top: -16px; }
.option-icons .xyz { font-size: 8px; line-height: 8px; border: 1px solid #99966a; color: #66622b; background: #f3f1d1; }
.option { display: flex; align-items: center; gap: 3px; height: 16px; padding-left: 5px; white-space: nowrap; }
.option.links { gap: 3px; padding-left: 3px; }
.options h3.second { margin: 3px 0 1px; }
.properties .prop-body { display: flex; height: 77px; overflow: hidden; border: 1px solid #c9ccd8; border-width: 1px 0; box-sizing: border-box; }
.prop-body table { flex: 1; border-collapse: collapse; table-layout: fixed; height: 80px; }
.c1 { width: 15px; }
.c2 { width: 67px; }
.prop-body td, .prop-body th { height: 13px; line-height: 13px; padding: 0 0 0 3px; text-align: left; white-space: nowrap; overflow: hidden; }
.prop-body td:first-child { background: #e6e7ee; }
.prop-body td:nth-child(2) { border-right: 1px solid #e4e5ea; }
.cat { background: #e6e7ee; color: #15171a; }
.cat .expander { vertical-align: 1px; }
.shade { background: #e9eaef; color: #8a8c91; }
.muted { color: #7d7f84; }
.swatch { display: inline-block; width: 14px; height: 8px; margin-right: 7px; border: 1px solid #3d4a3e; background: #8fae90; vertical-align: -1px; }
.scroll { display: flex; flex-direction: column; align-items: center; width: 12px; padding: 4px 0; background: #eeeff2; box-sizing: border-box; }
.thumb { display: grid; place-items: center; width: 10px; height: 36px; margin: 6px 0 auto; border: 1px solid #aaadb6; background: #dcdde3; box-sizing: border-box; }

.stage { position: relative; display: flex; flex-direction: column; flex: 1; min-width: 0; padding: 4px 2px 1px 3px; overflow: hidden; }
.viewport { position: relative; flex: 1; min-height: 0; border: 1px solid #b9bdcb; background: #fefefe; }
.scene { width: 100%; height: 100%; }
.labels { font: bold 10px "Liberation Sans", sans-serif; text-anchor: middle; }
.dimension { box-sizing: border-box; width: 100%; height: 18px; display: block; border: 2px solid #e8eef5; outline: 0; padding: 0; background: #3f87dc; color: #f6faff; font: 11px/14px "Liberation Sans", sans-serif; text-align: center; }
.overlay { position: absolute; top: 7px; left: 9px; }
.hint { font: 11px/14px "Liberation Sans", sans-serif; color: #696b6e; margin-bottom: 7px; }
.guide-row { display: flex; gap: 6px; padding-left: 3px; margin-bottom: 26px; }
.guide-row.first { margin-bottom: 13px; }
.guide-row button { width: 27px; height: 27px; justify-content: center; border: 1px solid #999b9f; border-radius: 4px; box-sizing: border-box; background: #fefefe; }
.guide-row button.large { width: 40px; height: 40px; border-radius: 6px; }
.doc-tabs { display: flex; justify-content: space-between; height: 20px; margin-top: 3px; background: #f4f5fb; border-top: 1px solid #c3c7d5; box-sizing: border-box; }
.doc { padding: 0 3px 0 2px; border: 1px solid #7c93a8; border-top: 0; font-weight: bold; color: #35607e; height: 18px; }
.close { margin-left: 2px; }
.doc-nav { display: flex; gap: 7px; padding-right: 1px; }
.recorder { position: absolute; top: 120px; right: -28px; width: 42px; height: 42px; box-sizing: border-box; border-radius: 21px; border: 2px solid #173718; background: #243d26; box-shadow: inset 0 0 0 2px #38b83b; }

.status { display: flex; align-items: center; flex: none; height: 29px; background: #2b5b87; color: #fff; }
.status p { flex: 1; padding-left: 7px; }
.status-cell { height: 20px; box-sizing: border-box; display: flex; align-items: center; border-left: 1px solid #6490b5; }
.progress { width: 126px; }
.messages { width: 53px; justify-content: flex-end; padding-right: 4px; }
.messages button { gap: 6px; }
.blank { width: 43px; }
.count { width: 87px; padding-left: 25px; }
.alert { width: 11px; height: 11px; border-radius: 6px; background: #d93232; font-weight: bold; line-height: 11px; text-align: center; }
.status-tools { display: flex; align-items: center; gap: 6px; padding-right: 20px; }
.status-tools button { gap: 4px; }
.spinner { display: flex; flex-direction: column; gap: 4px; }
.spinner .caret { border-width: 0 4px 4px; border-bottom-color: #5fa3d9; }
.spinner .caret:last-child { border-width: 4px 4px 0; border-top-color: #5fa3d9; }
.edge { flex: none; height: 3px; padding-left: 50px; background: #8e1b31; }
.edge span { display: block; width: 34px; height: 3px; background: #e8a8b2; }
</style>
